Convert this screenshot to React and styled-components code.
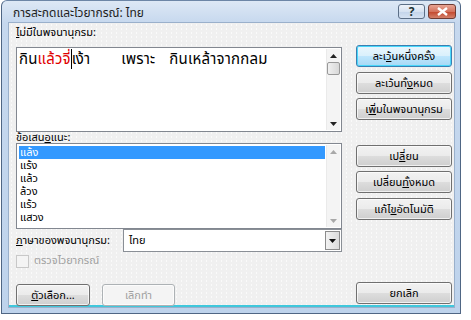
import React from "react";
import styled, { createGlobalStyle, css } from "styled-components";

const Global = createGlobalStyle`
  html, body { margin: 0; padding: 0; background: #ffffff; }
  body { font-family: Tahoma, "Noto Sans Thai", "Noto Sans", "DejaVu Sans", sans-serif; }
`;

const Window = styled.div`
  position: relative;
  width: 460px;
  height: 314px;
  margin-left: 1px;
  border: 1px solid #4f6684;
  border-top: 1px solid #6d86a6;
  border-radius: 6px 6px 0 0;
  background: linear-gradient(#dde8f5, #c6d8ee 22px, #bed3ec);
  display: flex;
  flex-direction: column;
  box-sizing: border-box;
  overflow: hidden;
`;

const TitleBar = styled.div`
  height: 21px;
  display: flex;
  align-items: center;
  padding: 0 4px 0 11px;
  font-size: 12px;
  color: #1e1e1e;
`;

const Title = styled.div`
  flex: 1;
  padding-top: 2px;
`;

const CaptionButton = styled.div`
  width: 27px;
  height: 15px;
  box-sizing: border-box;
  border: 1px solid #5c6f87;
  border-radius: 3px;
  display: flex;
  align-items: center;
  justify-content: center;
  margin-left: ${(p) => (p.$gap ? "3px" : "0")};
  ${(p) =>
    p.$close
      ? css`
          width: 28px;
          background: linear-gradient(#e8a493, #d4735e 50%, #c2452b 51%, #d3806a);
          border-color: #6e3b33;
        `
      : css`
          background: linear-gradient(#eef3fa, #d6e2f1 50%, #c3d4ea 51%, #d5e2f2);
        `}
`;

const Client = styled.div`
  flex: 1;
  margin: 0 5px 5px 6px;
  border: 1px solid #9ab0cb;
  background-color: #f0f0f0;
  background-image: radial-gradient(circle, #fafafa 0.6px, transparent 0.8px);
  background-size: 5px 4px;
  padding: 3px 7px 0 7px;
  display: grid;
  grid-template-columns: 326px 96px;
  column-gap: 14px;
  align-content: start;
  box-sizing: border-box;
  box-shadow: inset 0 -2px 0 #40c8dc;
`;

const LeftCol = styled.div`
  display: flex;
  flex-direction: column;
`;

const RightCol = styled.div`
  display: flex;
  flex-direction: column;
  padding-top: 19px;
`;

const Label = styled.div`
  font-size: 11px;
  height: ${(p) => p.$h || 21}px;
  line-height: ${(p) => p.$lh || 14}px;
  color: ${(p) => (p.$disabled ? "#a0a0a0" : "#000")};
  white-space: nowrap;
`;

const Box = styled.div`
  position: relative;
  height: ${(p) => p.$h}px;
  margin-top: ${(p) => p.$mt || 0}px;
  border: 1px solid #828790;
  background: #fff;
  box-sizing: border-box;
  display: flex;
`;

const BoxContent = styled.div`
  flex: 1;
  min-width: 0;
`;

const Scrollbar = styled.div`
  width: 13px;
  display: flex;
  flex-direction: column;
  justify-content: space-between;
  align-items: center;
  background: #f4f4f4;
  border-left: 1px solid #eaeaea;
  margin: 1px;
`;

const ArrowBox = styled.div`
  width: 13px;
  height: 13px;
  display: flex;
  align-items: center;
  justify-content: center;
`;

const Thumb = styled.div`
  width: 13px;
  height: 13px;
  box-sizing: border-box;
  border: 1px solid #999;
  border-radius: 2px;
  background: linear-gradient(90deg, #f0f0f0, #e4e4e4 50%, #d8d8d8);
`;

const EditText = styled.div`
  font-size: 15px;
  padding: 1px 0 0 2px;
  line-height: 20px;
  white-space: pre;
  color: #000;
`;

const Word = styled.span`
  display: inline-block;
  margin-left: ${(p) => p.$ml || 0}px;
  letter-spacing: 0.2px;
`;

const Red = styled.span`
  color: #e00000;
`;

const Caret = styled.span`
  display: inline-block;
  width: 1px;
  height: 20px;
  background: #000;
  vertical-align: -5px;
`;

const List = styled.div`
  padding: 2px 0 0 2px;
`;

const Item = styled.div`
  font-size: 11px;
  height: 13px;
  line-height: 13px;
  padding-left: 1px;
  color: ${(p) => (p.$sel ? "#fff" : "#000")};
  background: ${(p) => (p.$sel ? "#3399ff" : "transparent")};
  outline: ${(p) => (p.$sel ? "1px dotted #fff" : "none")};
`;

const Button = styled.div`
  width: ${(p) => p.$w || 96}px;
  height: 22px;
  box-sizing: border-box;
  border: 1px solid ${(p) => (p.$default ? "#3c7fb1" : p.$disabled ? "#adb2b5" : "#707070")};
  border-radius: 3px;
  background: ${(p) =>
    p.$disabled
      ? "#f4f4f4"
      : p.$default
      ? "linear-gradient(#eaf6fd, #d9f0fc 50%, #bee6fd 51%, #a7d9f5)"
      : "linear-gradient(#f2f2f2, #ebebeb 50%, #dddddd 51%, #cfcfcf)"};
  box-shadow: ${(p) => (p.$default ? "inset 0 0 0 1px #48d8fb" : "inset 0 0 0 1px rgba(255,255,255,0.7)")};
  font-size: 11px;
  color: ${(p) => (p.$disabled ? "#a0a0a0" : "#000")};
  display: flex;
  align-items: center;
  justify-content: center;
  margin-bottom: ${(p) => p.$mb || 0}px;
  white-space: nowrap;
`;

const Row = styled.div`
  display: flex;
  align-items: center;
  gap: ${(p) => p.$gap || 0}px;
  height: ${(p) => p.$h}px;
  margin-top: ${(p) => p.$mt || 0}px;
`;

const Combo = styled.div`
  width: 219px;
  height: 23px;
  box-sizing: border-box;
  border: 1px solid #8a8f96;
  background: #fff;
  display: flex;
  align-items: stretch;
  margin-left: auto;
`;

const ComboText = styled.div`
  flex: 1;
  font-size: 11px;
  padding-left: 5px;
  display: flex;
  align-items: center;
`;

const ComboBtn = styled.div`
  width: 15px;
  margin: 1px;
  box-sizing: border-box;
  border: 1px solid #8c8c8c;
  background: linear-gradient(90deg, #f2f2f2, #dcdcdc);
  display: flex;
  align-items: center;
  justify-content: center;
`;

const Check = styled.div`
  width: 13px;
  height: 13px;
  box-sizing: border-box;
  border: 1px solid #c8c8c8;
  background: #f4f4f4;
  margin-right: 5px;
`;

const Up = ({ c = "#222" }) => (
  <svg width="7" height="4" viewBox="0 0 7 4">
    <path d="M0 4 L3.5 0 L7 4 Z" fill={c} />
  </svg>
);
const Down = ({ c = "#222" }) => (
  <svg width="7" height="4" viewBox="0 0 7 4">
    <path d="M0 0 L3.5 4 L7 0 Z" fill={c} />
  </svg>
);

export default function App() {
  return (
    <>
      <Global />
      <Window>
        <TitleBar>
          <Title>การสะกดและไวยากรณ์: ไทย</Title>
          <CaptionButton>
            <span style={{ fontSize: 12, fontWeight: "bold", color: "#233", lineHeight: "12px" }}>?</span>
          </CaptionButton>
          <CaptionButton $close $gap>
            <svg width="11" height="9" viewBox="0 0 11 9">
              <path d="M1 1 L10 8 M10 1 L1 8" stroke="#fff" strokeWidth="2.4" />
            </svg>
          </CaptionButton>
        </TitleBar>
        <Client>
          <LeftCol>
            <Label>
              <u>ไ</u>ม่มีในพจนานุกรม:
            </Label>
            <Box $h={85}>
              <BoxContent>
                <EditText>
                  <Word>
                    กิน<Red>แล้วจี่</Red>
                    <Caret />
                    เง้า
                  </Word>
                  <Word $ml={31}>เพราะ</Word>
                  <Word $ml={14}>กินเหล้าจากกลม</Word>
                </EditText>
              </BoxContent>
              <Scrollbar>
                <div>
                  <ArrowBox>
                    <Up />
                  </ArrowBox>
                  <Thumb />
                </div>
                <ArrowBox>
                  <Down />
                </ArrowBox>
              </Scrollbar>
            </Box>
            <Label $h={11} $lh={12}>
              ข้อเสน<u>อ</u>แนะ:
            </Label>
            <Box $h={86}>
              <BoxContent>
                <List>
                  <Item $sel>แล้ง</Item>
                  <Item>แร้ง</Item>
                  <Item>แล้ว</Item>
                  <Item>ล้วง</Item>
                  <Item>แร้ว</Item>
                  <Item>แสวง</Item>
                </List>
              </BoxContent>
              <Scrollbar>
                <ArrowBox>
                  <Up c="#a8a8a8" />
                </ArrowBox>
                <ArrowBox>
                  <Down c="#a8a8a8" />
                </ArrowBox>
              </Scrollbar>
            </Box>
            <Row $h={23}>
              <Label $h={14}>
                <u>ภ</u>าษาของพจนานุกรม:
              </Label>
              <Combo>
                <ComboText>ไทย</ComboText>
                <ComboBtn>
                  <Down c="#111" />
                </ComboBtn>
              </Combo>
            </Row>
            <Row $h={16} $mt={1}>
              <Check />
              <Label $h={14} $disabled>
                ตรวจไวยากรณ์
              </Label>
            </Row>
            <Row $h={22} $mt={15} $gap={12}>
              <Button $w={74}>
                <u>ตั</u>วเลือก...
              </Button>
              <Button $w={73} $disabled>
                เลิกทำ
              </Button>
            </Row>
          </LeftCol>
          <RightCol>
            <Button $default $mb={5}>
              ละเ<u>ว้</u>นหนึ่งครั้ง
            </Button>
            <Button $mb={4}>
              ละเว้นทั้<u>ง</u>หมด
            </Button>
            <Button $mb={25}>
              เ<u>พิ่</u>มในพจนานุกรม
            </Button>
            <Button $mb={4}>
              เป<u>ล</u>ี่ยน
            </Button>
            <Button $mb={5}>
              เปลี่ยน<u>ทั้</u>งหมด
            </Button>
            <Button $mb={62}>
              แก้ไ<u>ข</u>อัตโนมัติ
            </Button>
            <Button>ยกเลิก</Button>
          </RightCol>
        </Client>
      </Window>
    </>
  );
}
